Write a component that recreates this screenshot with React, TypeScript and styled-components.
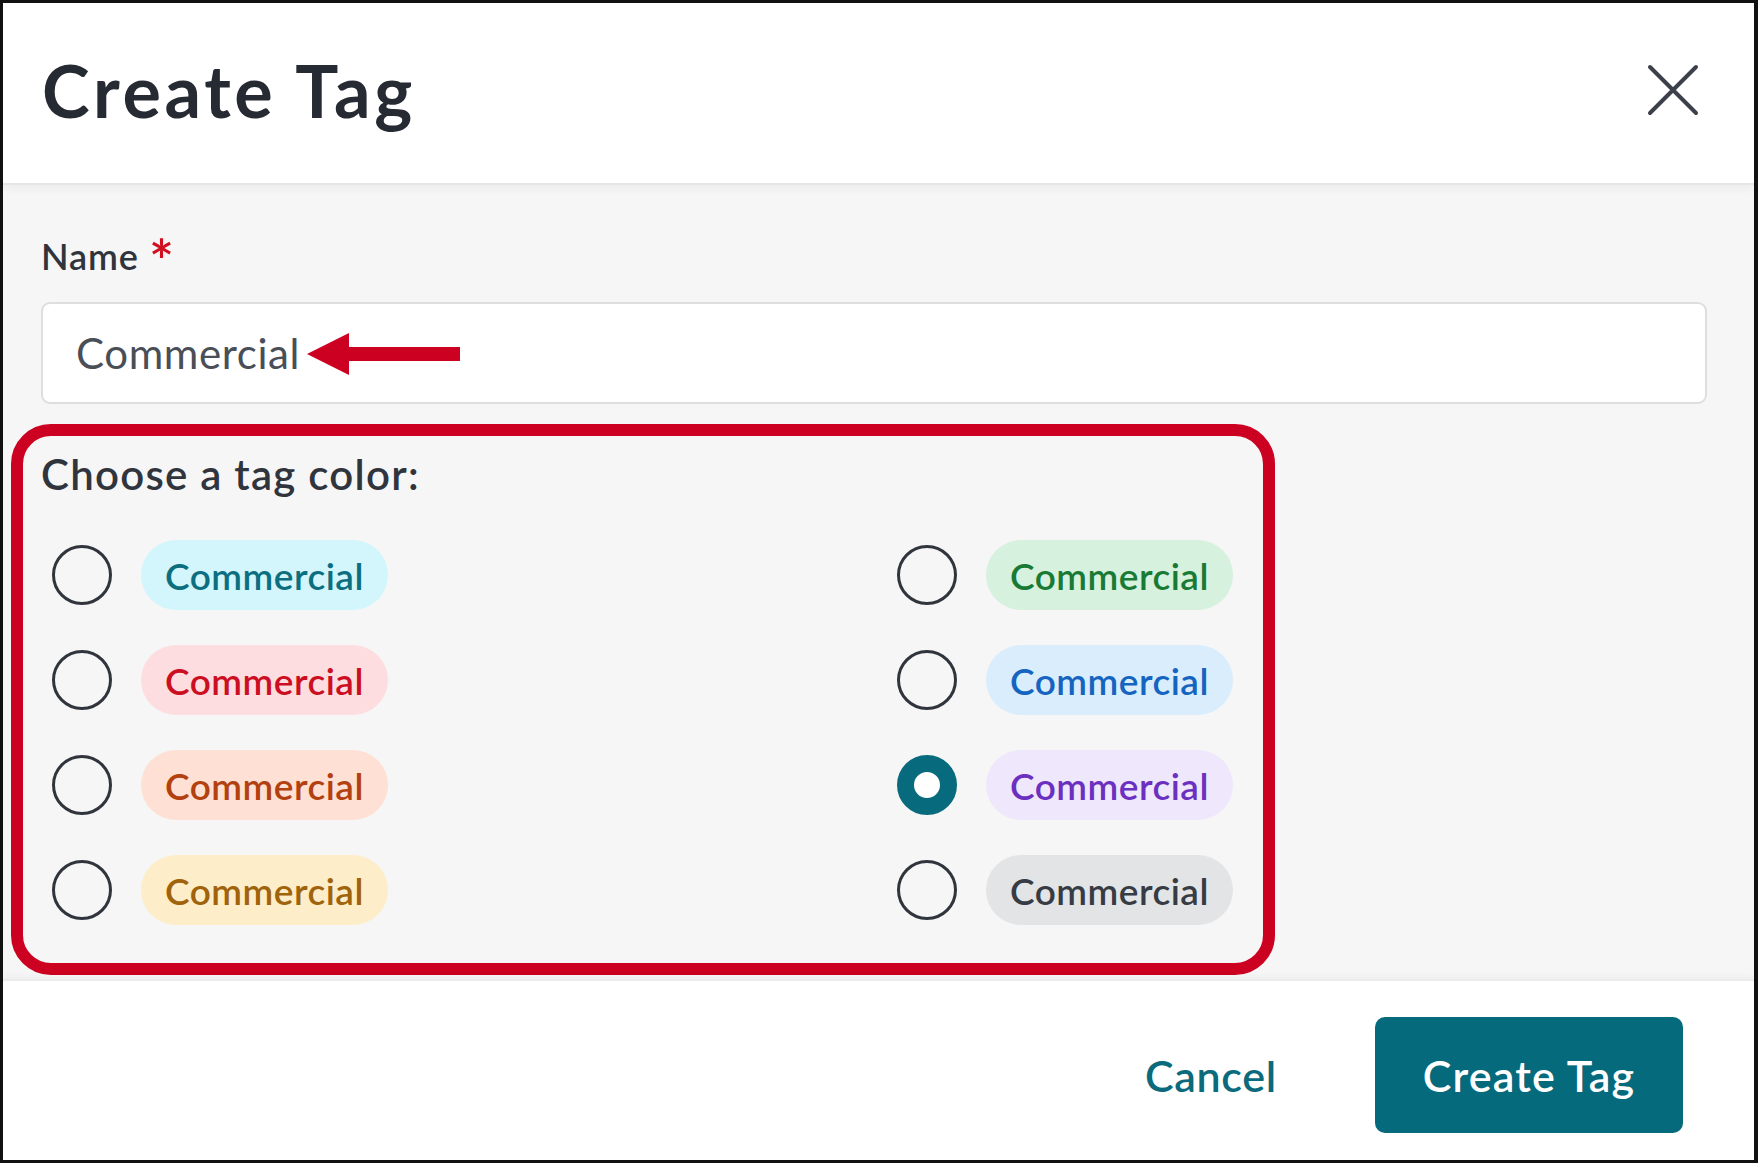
import styled, { createGlobalStyle } from 'styled-components';

const GlobalStyle = createGlobalStyle`
  html, body {
    margin: 0;
    padding: 0;
    background: #ffffff;
  }
  body {
    font-family: Lato, "Open Sans", sans-serif;
  }
  * {
    box-sizing: border-box;
  }
`;

const Frame = styled.div`
  width: 1758px;
  height: 1163px;
  border: 3px solid #111111;
  border-right-width: 4px;
  display: flex;
  flex-direction: column;
  background: #f6f6f6;
  overflow: hidden;
`;

const Header = styled.header`
  position: relative;
  z-index: 2;
  height: 182px;
  flex-shrink: 0;
  display: flex;
  align-items: center;
  justify-content: space-between;
  padding: 0 55px 6px 39px;
  background: #ffffff;
  border-bottom: 2px solid #e6e6e6;
  box-shadow: 0 3px 10px rgba(0, 0, 0, 0.05);
`;

const Title = styled.h1`
  margin: 0;
  font-size: 72px;
  font-weight: 700;
  letter-spacing: 3.6px;
  color: #262a33;
`;

const CloseButton = styled.button`
  border: 0;
  padding: 0;
  background: none;
  width: 52px;
  height: 52px;
  display: flex;
  cursor: pointer;
`;

const Body = styled.main`
  flex: 1;
  padding: 50px 47px 0 38px;
  background: #f6f6f6;
`;

const Label = styled.label`
  display: flex;
  align-items: flex-start;
  height: 43px;
  font-size: 36px;
  line-height: 43px;
  font-weight: 600;
  letter-spacing: 0.9px;
  color: #30343c;
`;

const Required = styled.span`
  color: #d0101f;
  font-size: 60px;
  line-height: 60px;
  margin-left: 10px;
  margin-top: -5px;
  height: 43px;
  overflow: visible;
`;

const InputWrap = styled.div`
  position: relative;
  margin-top: 24px;
`;

const NameInput = styled.div`
  height: 102px;
  display: flex;
  align-items: center;
  padding-left: 33px;
  background: #ffffff;
  border: 2px solid #dedede;
  border-radius: 9px;
  font-size: 42px;
  letter-spacing: 0.6px;
  color: #4a4e56;
`;

const Arrow = styled.svg`
  position: absolute;
  left: 266px;
  top: 30px;
`;

const ColorSection = styled.section`
  position: relative;
  padding-top: 45px;
`;

const Annotation = styled.div`
  position: absolute;
  left: -30px;
  top: 20px;
  width: 1264px;
  height: 551px;
  border: 12px solid #cc0020;
  border-radius: 40px;
  pointer-events: none;
`;

const SectionTitle = styled.h2`
  margin: 0;
  font-size: 42px;
  line-height: 50px;
  font-weight: 600;
  letter-spacing: 1.25px;
  color: #30343c;
`;

const ColorGrid = styled.div`
  margin-top: 41px;
  padding-left: 11px;
  display: grid;
  grid-template-columns: 845px 1fr;
  row-gap: 35px;
`;

const Option = styled.label`
  display: flex;
  align-items: center;
  gap: 29px;
  height: 70px;
  cursor: pointer;
`;

const Radio = styled.span<{ $checked?: boolean }>`
  width: 60px;
  height: 60px;
  flex-shrink: 0;
  border-radius: 50%;
  border: ${(p) => (p.$checked ? '17px solid #086b7d' : '3.5px solid #30343c')};
  background: ${(p) => (p.$checked ? '#ffffff' : 'transparent')};
`;

const Pill = styled.span<{ $bg: string; $fg: string }>`
  display: inline-flex;
  align-items: center;
  height: 70px;
  padding: 0 24px;
  border-radius: 35px;
  background: ${(p) => p.$bg};
  color: ${(p) => p.$fg};
  font-size: 37px;
  font-weight: 600;
  letter-spacing: 0.5px;
`;

const Footer = styled.footer`
  position: relative;
  z-index: 2;
  height: 181px;
  flex-shrink: 0;
  display: flex;
  align-items: center;
  justify-content: flex-end;
  gap: 98px;
  padding: 9px 71px 0 0;
  background: #ffffff;
  border-top: 2px solid #ebebeb;
  box-shadow: 0 -3px 6px rgba(0, 0, 0, 0.03);
`;

const CancelButton = styled.button`
  border: 0;
  padding: 0;
  background: none;
  font-family: inherit;
  font-size: 43px;
  font-weight: 600;
  letter-spacing: 0.7px;
  color: #0b6a7b;
  cursor: pointer;
`;

const PrimaryButton = styled.button`
  width: 308px;
  height: 116px;
  border: 0;
  border-radius: 10px;
  background: #056a7c;
  font-family: inherit;
  font-size: 43px;
  font-weight: 600;
  letter-spacing: 1.2px;
  color: #ffffff;
  cursor: pointer;
`;

const colors = [
  { bg: '#d3f5fc', fg: '#0b6f80' },
  { bg: '#d6f1de', fg: '#187a34' },
  { bg: '#fddde0', fg: '#cc0e22' },
  { bg: '#daedfd', fg: '#1565c0' },
  { bg: '#fee0d4', fg: '#b3410f' },
  { bg: '#efe7fb', fg: '#6b30c0', checked: true },
  { bg: '#fdedc8', fg: '#a0620a' },
  { bg: '#e3e4e6', fg: '#363b44' },
];

export default function App() {
  return (
    <>
      <GlobalStyle />
      <Frame>
        <Header>
          <Title>Create Tag</Title>
          <CloseButton aria-label="Close">
            <svg width="52" height="52" viewBox="0 0 52 52">
              <path
                d="M3 3 L49 49 M49 3 L3 49"
                stroke="#3b404a"
                strokeWidth="4"
                strokeLinecap="round"
              />
            </svg>
          </CloseButton>
        </Header>
        <Body>
          <Label>
            Name<Required>*</Required>
          </Label>
          <InputWrap>
            <NameInput>Commercial</NameInput>
            <Arrow width="154" height="44" viewBox="0 0 154 44">
              <polygon points="0,22 42,1 42,43" fill="#cc0020" />
              <rect x="40" y="15" width="113" height="14" fill="#cc0020" />
            </Arrow>
          </InputWrap>
          <ColorSection>
            <Annotation />
            <SectionTitle>Choose a tag color:</SectionTitle>
            <ColorGrid>
              {colors.map((c, i) => (
                <Option key={i}>
                  <Radio $checked={c.checked} />
                  <Pill $bg={c.bg} $fg={c.fg}>
                    Commercial
                  </Pill>
                </Option>
              ))}
            </ColorGrid>
          </ColorSection>
        </Body>
        <Footer>
          <CancelButton>Cancel</CancelButton>
          <PrimaryButton>Create Tag</PrimaryButton>
        </Footer>
      </Frame>
    </>
  );
}
